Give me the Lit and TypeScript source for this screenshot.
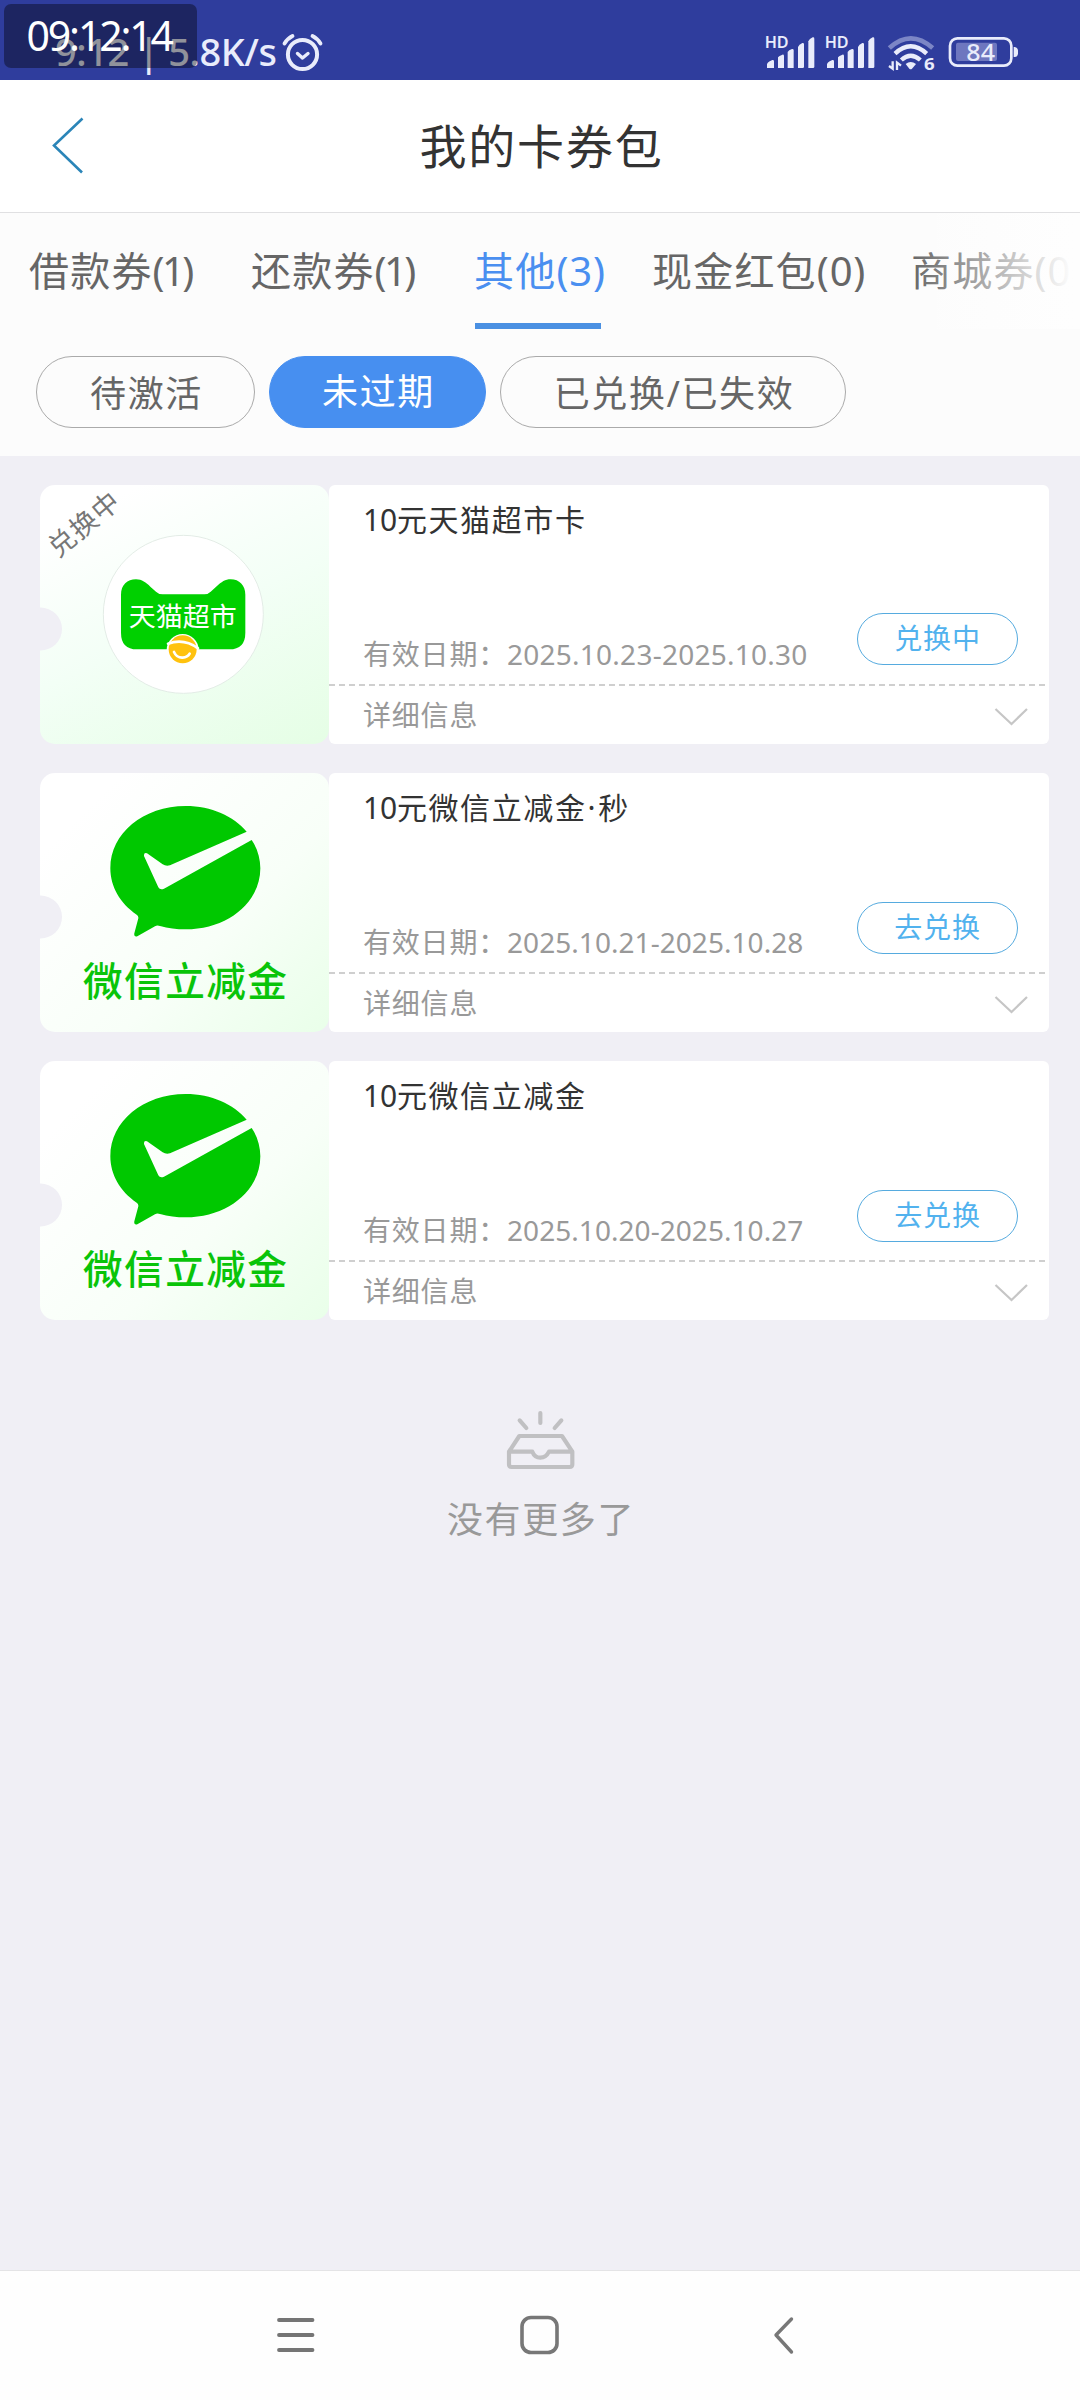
import { LitElement, html, svg, css } from "lit";
import { customElement, property } from "lit/decorators.js";

const fontStack = css`"Noto Sans", "Noto Sans CJK SC", sans-serif`;

@customElement("status-bar")
class StatusBar extends LitElement {
  static styles = css`
    :host {
      display: block;
      position: relative;
      height: 80px;
      background: #2f3d9d;
      color: #e9ecfb;
      font-family: ${fontStack};
    }
    .row {
      display: flex;
      justify-content: space-between;
      height: 80px;
    }
    .left, .right { display: block; }
    .clock {
      position: absolute;
      left: 4px;
      top: 4px;
      width: 193px;
      height: 64px;
      border-radius: 7px;
      background: rgba(0, 0, 0, 0.38);
    }
    text { font-family: ${fontStack}; }
  `;

  bars(x: number) {
    return svg`
      <text x=${x - 3} y="143" font-size="46" font-weight="600" textLength="72" lengthAdjust="spacingAndGlyphs">HD</text>
      <path d="M${x + 4} 204 v-12 q2-5 8-8 l8-4 q5-1 5 4 v20z"/>
      <path d="M${x + 37} 204 v-32 q3-5 13-8 q5-1 5 4 v36 q0 0-4 0z"/>
      <path d="M${x + 66} 204 v-48 q3-6 13-9 q5-1 5 4 v53z"/>
      <path d="M${x + 97} 204 v-63 q3-8 13-12 q5-1 5 4 v67 q0 4-4 4z"/>
      <path d="M${x + 128} 204 v-80 q3-8 13-12 q5-1 5 4 v84 q0 4-4 4z"/>`;
  }

  render() {
    return html`
      <div class="row">
        <svg class="left" width="340" height="80" viewBox="0 0 340 80" fill="#e9ecfb">
          <text x="55" y="66" font-size="38" font-weight="500" textLength="222">9:12 | 5.8K/s</text>
          <g fill="none" stroke="#e9ecfb" stroke-linecap="round">
            <circle cx="302.5" cy="54.5" r="14.6" stroke-width="4" />
            <path d="M297.5 53.5l5 4.5 5.5-4.5" stroke-width="3.4" stroke-linejoin="round" />
            <path d="M284.5 43.5q3-5 8-7.5M312.5 36q5 2.500 8 7.500" stroke-width="3.8" />
          </g>
        </svg>
        <svg class="right" width="340" height="80" viewBox="0 0 1020 240" fill="#e9ecfb">
          ${this.bars(77)} ${this.bars(257)}
          <g fill="none" stroke="#e9ecfb" stroke-width="13">
            <path d="M448 144Q512 86 578 144" stroke="#7c86c6" stroke-width="14" />
            <path d="M465 161Q512 117 560 161" />
            <path d="M484 180Q512 154 541 180" />
          </g>
          <path d="M497 192q15-12 31 0l-12 14q-4 3-8 0z" />
          <path d="M458 184v22l-11-8M471 210v-22l12 9" fill="none" stroke="#e9ecfb" stroke-width="7" />
          <text x="552" y="210" font-size="46" font-weight="700" textLength="32" lengthAdjust="spacingAndGlyphs">6</text>
          <rect x="630" y="115" width="184" height="82" rx="22" fill="none" stroke="#e9ecfb" stroke-width="8" />
          <rect x="648" y="128" width="123" height="55" rx="6" fill="#6e77bf" />
          <path d="M821 141h3q10 2 10 10v10q0 8-10 10h-3z" />
          <text x="679" y="183" font-size="72" font-weight="500" textLength="86" lengthAdjust="spacingAndGlyphs">84</text>
        </svg>
      </div>
      <svg class="clock" width="193" height="64" viewBox="0 0 193 64" fill="#fff">
        <text x="22.5" y="47" font-size="41" textLength="147.500">09:12:14</text>
      </svg>
    `;
  }
}

type Art = "tmall" | "wechat";
interface Coupon {
  art: Art;
  title: string;
  date: string;
  action: string;
  tag?: string;
}

@customElement("coupon-card")
class CouponCard extends LitElement {
  @property({ attribute: false }) coupon!: Coupon;

  static styles = css`
    :host {
      display: flex;
      height: 259px;
      font-family: ${fontStack};
    }
    .art {
      flex: none;
      width: 289px;
      height: 259px;
      border-radius: 15px;
      overflow: hidden;
    }
    .tmall { background: linear-gradient(155deg, #fff 12%, #f3fff6 52%, #e5fee5 100%); }
    .wechat { background: linear-gradient(135deg, #fff 15%, #f8fff8 62%, #e9ffe9 100%); }
    .art svg { display: block; }
    text { font-family: ${fontStack}; }
    .body {
      flex: 1;
      display: flex;
      flex-direction: column;
      background: #fff;
      border-radius: 6px;
    }
    .main {
      height: 199px;
      box-sizing: border-box;
      padding: 17px 31px 0 34px;
      display: flex;
      flex-direction: column;
      justify-content: space-between;
    }
    .title {
      font-size: 30px;
      line-height: 36px;
      letter-spacing: 1.6px;
      color: #333;
    }
    .lead { letter-spacing: -0.2px; }
    .dot { margin: 0 1px; }
    .info {
      display: flex;
      justify-content: space-between;
      align-items: flex-start;
      height: 71px;
    }
    .date {
      margin-top: 23px;
      font-size: 28px;
      line-height: 36px;
      letter-spacing: 0.8px;
      color: #999;
      white-space: nowrap;
    }
    .num { letter-spacing: 0.25px; }
    .wechat-num { letter-spacing: 0.05px; }
    .btn {
      box-sizing: border-box;
      width: 161px;
      height: 52px;
      border: 1px solid #56abdf;
      border-radius: 26px;
      text-align: center;
      font-size: 28px;
      line-height: 49px;
      letter-spacing: 0.8px;
      color: #52b2ee;
    }
    .wechat-btn { margin-top: 1px; }
    .dash {
      height: 2px;
      background: repeating-linear-gradient(90deg, #cfcfcf 0 6px, transparent 6px 10px);
    }
    .more {
      display: flex;
      justify-content: space-between;
      align-items: center;
      height: 58px;
      padding: 0 20px 0 34px;
      font-size: 28px;
      line-height: 36px;
      letter-spacing: 0.8px;
      color: #999;
    }
    .more svg { margin-top: 2px; }
  `;

  tmall(tag: string) {
    return svg`<g transform="translate(-20 -15) scale(.33333)">
      <g transform="translate(190 163) rotate(-40)">
        <text x="-124" y="30" font-size="81" fill="#777" textLength="250">${tag}</text>
      </g>
      <ellipse cx="490" cy="433" rx="240" ry="237" fill="#fff" stroke="#e3ece6" stroke-width="3"/>
      <path fill="#00d000" d="M303 374C303 345 322 328 348 328C366 328 378 338 391 350L408 365Q416 373 428 373H553Q564 373 572 365L590 349C604 336 616 328 632 328C658 328 676 346 676 374V488Q676 538 628 538H351Q303 538 303 488Z"/>
      <text x="326" y="469" font-size="80" fill="#fff" textLength="324" lengthAdjust="spacingAndGlyphs">天猫超市</text>
      <circle cx="488" cy="540" r="48" fill="#fff"/>
      <circle cx="488" cy="538" r="42" fill="#ffc20e"/>
      <path d="M444 521Q492 504 534 535M462 546Q470 564 488 563Q503 562 509 551" fill="none" stroke="#fff" stroke-width="8" stroke-linecap="round"/>
    </g>`;
  }

  wechat() {
    return svg`<g transform="translate(-20 -13) scale(.33333)">
      <path fill="#00c800" d="M680 215C640 168 575 138 497 138C370 138 271 220 271 325C271 380 300 430 350 464Q356 468 355 475L343 520Q341 532 352 529L405 499Q411 495 420 498C444 505 470 508 497 508C622 508 721 428 721 325C721 295 712 264 695 240L432 386Q420 391 415 382L372 288Q371 277 381 280L428 313Q438 320 450 316Z"/>
      <text x="189" y="707" font-size="119" font-weight="500" fill="#09c409" textLength="612">微信立减金</text>
    </g>`;
  }

  titleParts(title: string) {
    return title
      .split(/(^\d+|·)/)
      .filter((s) => s)
      .map((s) => (s === "·" ? html`<span class="dot">·</span>` : /^\d/.test(s) ? html`<span class="lead">${s}</span>` : s));
  }

  render() {
    const c = this.coupon;
    return html`
      <div class="art ${c.art}">
        <svg width="289" height="259" viewBox="0 0 289 259">
          ${c.art === "tmall" ? this.tmall(c.tag ?? "") : this.wechat()}
          <circle cx="0.5" cy="144" r="21.5" fill="#f0eff5" />
        </svg>
      </div>
      <div class="body">
        <div class="main">
          <div class="title">${this.titleParts(c.title)}</div>
          <div class="info">
            <div class="date">有效日期：<span class="num ${c.art}-num">${c.date}</span></div>
            <div class="btn ${c.art}-btn">${c.action}</div>
          </div>
        </div>
        <div class="dash"></div>
        <div class="more">
          <span>详细信息</span>
          <svg width="36" height="22" viewBox="0 0 36 22" fill="none" stroke="#c6c6c6" stroke-width="2.200">
            <path d="M2.500 4L18.500 19 34 4" />
          </svg>
        </div>
      </div>
    `;
  }
}

@customElement("app-root")
class AppRoot extends LitElement {
  static styles = css`
    :host {
      display: flex;
      flex-direction: column;
      width: 1080px;
      height: 2400px;
      overflow: hidden;
      background: #f0eff5;
      font-family: ${fontStack};
    }
    .header {
      display: grid;
      grid-template-columns: 120px 1fr 120px;
      align-items: center;
      height: 132px;
      background: #fff;
      border-bottom: 1px solid #e0e0e2;
    }
    .back { display: block; margin-left: 50px; }
    .heading {
      padding-left: 3px;
      text-align: center;
      font-size: 47px;
      letter-spacing: 1.8px;
      line-height: 60px;
      color: #333;
    }
    .filters { height: 243px; background: #fcfcfc; }
    .tabs {
      position: relative;
      display: grid;
      grid-template-columns: 222px 221px 180px 259px 1fr;
      height: 116px;
      padding-left: 29px;
      overflow: hidden;
      font-size: 40px;
      line-height: 116px;
      letter-spacing: 1.2px;
      color: #666;
      white-space: nowrap;
    }
    .tab { display: flex; }
    .on { color: #4a8ff0; }
    .tabtext {
      height: 116px;
      box-sizing: border-box;
    }
    .on .tabtext {
      margin-left: 3px;
      width: 126px;
      border-bottom: 6px solid #4a90e2;
      text-indent: -1px;
    }
    .count { letter-spacing: 0.8px; }
    .narrow { letter-spacing: -2.6px; }
    .fade {
      position: absolute;
      right: 0;
      top: 0;
      width: 170px;
      height: 116px;
      background: linear-gradient(90deg, rgba(254, 254, 254, 0), #fefefe 96%);
    }
    .pills {
      display: flex;
      gap: 14px;
      padding: 27px 36px 0;
    }
    .pill {
      box-sizing: border-box;
      height: 72px;
      border: 1px solid #aaa;
      border-radius: 36px;
      padding-left: 2px;
      text-align: center;
      font-size: 36px;
      line-height: 73px;
      letter-spacing: 1.6px;
      color: #666;
    }
    .p0 { width: 219px; }
    .p1 {
      width: 217px;
      border-color: #478ff0;
      background: #478ff0;
      color: #fff;
      line-height: 70px;
    }
    .p2 { width: 346px; }
    .list {
      display: flex;
      flex-direction: column;
      gap: 29px;
      padding: 29px 31px 0 40px;
    }
    .end {
      flex: 1;
      display: flex;
      flex-direction: column;
      align-items: center;
      gap: 26px;
      padding-top: 90px;
      font-size: 36px;
      line-height: 44px;
      letter-spacing: 1.6px;
      color: #999;
    }
    .endtext { padding-left: 2px; }
    .nav {
      display: grid;
      grid-template-columns: 244px 253px 1fr;
      box-sizing: border-box;
      height: 130px;
      padding: 42px 0 0 273px;
      background: #fefefe;
      border-top: 1px solid #e4e4e6;
    }
  `;

  private tabs: [string, number][] = [
    ["借款券", 1],
    ["还款券", 1],
    ["其他", 3],
    ["现金红包", 0],
    ["商城券", 0],
  ];
  private pills = ["待激活", "未过期", "已兑换/已失效"];
  private coupons: Coupon[] = [
    { art: "tmall", title: "10元天猫超市卡", date: "2025.10.23-2025.10.30", action: "兑换中", tag: "兑换中" },
    { art: "wechat", title: "10元微信立减金·秒", date: "2025.10.21-2025.10.28", action: "去兑换" },
    { art: "wechat", title: "10元微信立减金", date: "2025.10.20-2025.10.27", action: "去兑换" },
  ];

  render() {
    return html`
      <status-bar></status-bar>
      <div class="header">
        <svg class="back" width="36" height="60" viewBox="0 0 36 60" fill="none" stroke="#2b85b8" stroke-width="2.600">
          <path d="M32.500 2.500L4 29.500 32 56.500" />
        </svg>
        <div class="heading">我的卡券包</div>
      </div>
      <div class="filters">
        <div class="tabs">
          ${this.tabs.map(
            ([name, n], i) => html`<div class="tab ${i === 2 ? "on" : ""}">
              <div class="tabtext">${name}<span class="count ${n === 1 ? "narrow" : ""}">(${n})</span></div>
            </div>`
          )}
          <div class="fade"></div>
        </div>
        <div class="pills">
          ${this.pills.map((p, i) => html`<div class="pill p${i}">${p}</div>`)}
        </div>
      </div>
      <div class="list">
        ${this.coupons.map((c) => html`<coupon-card .coupon=${c}></coupon-card>`)}
      </div>
      <div class="end">
        <svg width="70" height="62" viewBox="255 60 210 186" fill="none" stroke="#c0c0c2" stroke-width="12.500" stroke-linecap="round" stroke-linejoin="round">
          <path d="M361 69V99M299 91L319 114M424 91L404 114" />
          <path d="M267 185L298 138H426L457 185V223Q457 231 449 231H275Q267 231 267 223ZM267 185H337Q344 203 361 203T387 185H457" />
        </svg>
        <div class="endtext">没有更多了</div>
      </div>
      <div class="nav">
        <svg width="44" height="44" viewBox="0 0 44 44" stroke="#757575" stroke-width="3.800" stroke-linecap="round">
          <path d="M6 7H39.500M6 22H39.500M6 37H39.500" />
        </svg>
        <svg width="44" height="44" viewBox="0 0 44 44" fill="none" stroke="#777" stroke-width="3.600">
          <rect x="5" y="4.500" width="35" height="35" rx="9" />
        </svg>
        <svg width="32" height="44" viewBox="0 0 32 44" fill="none" stroke="#777" stroke-width="3.400" stroke-linecap="round" stroke-linejoin="round">
          <path d="M21.500 6L6 22 21.500 39" />
        </svg>
      </div>
    `;
  }
}
